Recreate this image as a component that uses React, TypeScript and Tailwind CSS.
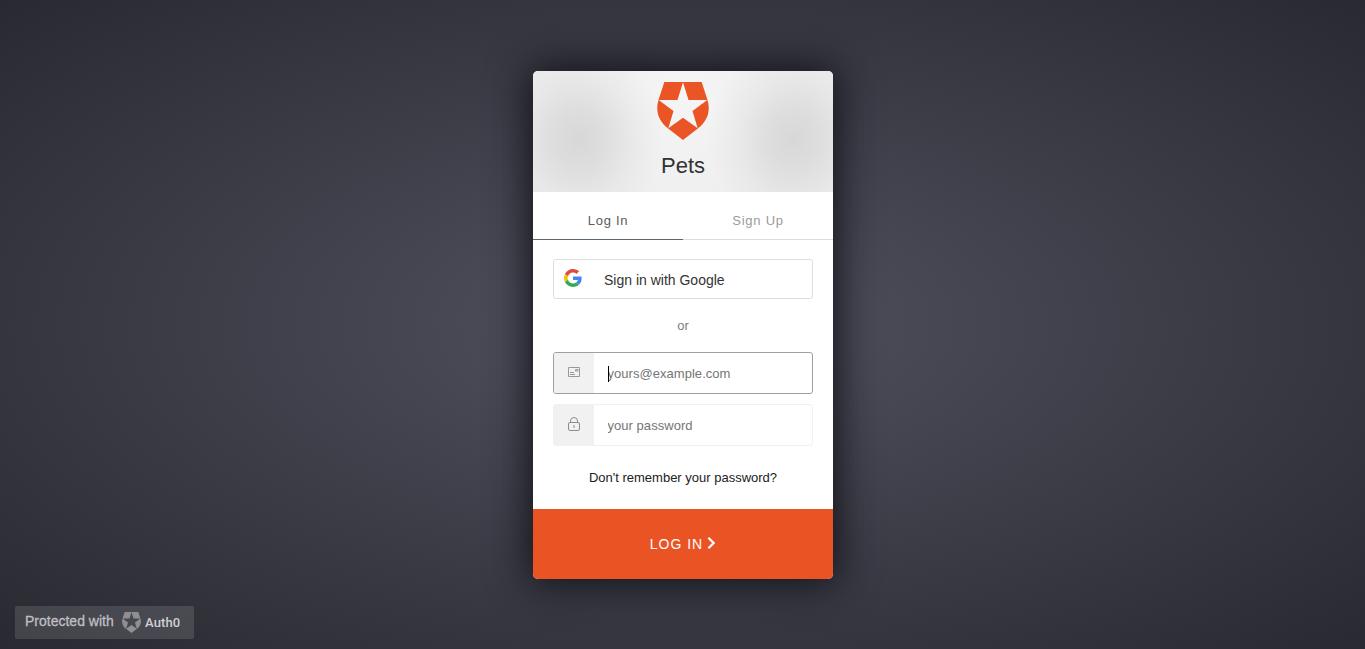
function Shield({ className }: { className: string }) {
  return (
    <svg viewBox="0 0 156 174" preserveAspectRatio="none" className={className} fill="currentColor" fillRule="evenodd" aria-hidden="true">
      <path d="M22 0H134L151.500 54C162 88 150 119 122.500 139.500L78 174L33.500 139.500C6 119 -6 88 4.500 54ZM78 1L61.500 54H5L49.500 87L34 139L78 107L122 139L106.500 87L151 54H94.500Z" />
    </svg>
  );
}

function GoogleIcon() {
  return (
    <svg viewBox="0 0 48 48" className="h-[18px] w-[18px]" aria-hidden="true">
      <path fill="#DE4B3D" d="M24 9.5c3.54 0 6.71 1.22 9.21 3.6l6.85-6.85C35.9 2.38 30.47 0 24 0 14.62 0 6.51 5.38 2.56 13.22l7.98 6.19C12.43 13.72 17.74 9.5 24 9.5z" />
      <path fill="#4285F4" d="M46.98 24.55c0-1.57-.15-3.09-.38-4.55H24v9.02h12.94c-.58 2.96-2.26 5.48-4.78 7.18l7.73 6c4.51-4.18 7.09-10.36 7.09-17.65z" />
      <path fill="#FBBC05" d="M10.53 28.59c-.48-1.45-.76-2.99-.76-4.59s.27-3.14.76-4.59l-7.98-6.19C.92 16.46 0 20.12 0 24c0 3.88.92 7.54 2.56 10.78l7.97-6.19z" />
      <path fill="#34A853" d="M24 48c6.48 0 11.93-2.13 15.89-5.81l-7.73-6c-2.15 1.45-4.92 2.3-8.16 2.3-6.26 0-11.57-4.22-13.47-9.91l-7.98 6.19C6.51 42.62 14.62 48 24 48z" />
    </svg>
  );
}

function MailIcon() {
  return (
    <svg width="12" height="10" viewBox="0 0 12 10" fill="none" stroke="#999" aria-hidden="true">
      <path d="M.5.5h11v9H.5z" />
      <path d="M7.500 2.500h2.500v1.500H7.500z" />
      <path d="M2 5.500h4M2 7.500h5" />
    </svg>
  );
}

function LockIcon() {
  return (
    <svg width="12" height="14" viewBox="0 0 12 14" fill="none" stroke="#8c8c8c" aria-hidden="true">
      <rect x=".5" y="5.5" width="11" height="8" rx="1.5" />
      <path d="M2.500 5.500V4a3.500 3.500 0 0 1 7 0v1.500M6 8v3" />
    </svg>
  );
}

export default function App() {
  return (
    <div className="flex h-[649px] flex-col overflow-hidden bg-[radial-gradient(#525260,#292931)] font-['Liberation_Sans',Arial,sans-serif]">
      <main className="mx-auto mt-[71px] h-[508px] w-[300px] shrink-0 rounded-[5px] bg-white shadow-[0_0_40px_4px_#111118]">
        <header className="flex h-[121px] flex-col items-center rounded-t-[5px] bg-[#eeeeee] bg-[radial-gradient(ellipse_85px_95px_at_46px_68px,rgba(208,208,208,0.75),rgba(210,210,210,0.6)_30%,rgba(215,215,215,0.28)_65%,transparent),radial-gradient(ellipse_85px_95px_at_260px_68px,rgba(208,208,208,0.75),rgba(210,210,210,0.6)_30%,rgba(215,215,215,0.28)_65%,transparent),radial-gradient(ellipse_120px_130px_at_150px_20px,#f5f5f5,transparent)] pt-[11px]">
          <Shield className="h-[58px] w-[52px] text-[#eb5424]" />
          <h1 className="ml-px mt-[12px] text-[22px] leading-[28px] text-[#333]">Pets</h1>
        </header>
        <nav className="flex h-[48px] pt-[10px] text-center text-[13px] leading-[37px] tracking-[0.75px]">
          <button className="w-[150px] border-b border-[#5c666f] pl-px text-[#5c5c5c]">Log In</button>
          <button className="w-[150px] border-b border-[#dcdcdc] pl-px text-[#9b9b9b]">Sign Up</button>
        </nav>
        <form className="flex h-[269px] flex-col px-[20px] pt-[19px]">
          <button type="button" className="flex h-[40px] shrink-0 items-center rounded-[3px] border border-[#dedede] pl-[10px] text-[#333]">
            <span className="-mt-[2px]"><GoogleIcon /></span>
            <span className="ml-[22.5px] mt-[2px] text-[14px] leading-[20px]">Sign in with Google</span>
          </button>
          <p className="mt-[17px] pl-px text-center text-[13px] leading-[20px] text-[#7c7c7c]">or</p>
          <label className="relative mt-[16px] flex h-[42px] shrink-0 overflow-hidden rounded-[3px] border border-[#a0a0a0]">
            <span className="flex w-[40px] items-center justify-center bg-[#f1f1f1] pb-[2px]"><MailIcon /></span>
            <input type="email" placeholder="yours@example.com" className="w-[218px] pl-[14px] pt-[2px] text-[13px] tracking-[0.04px] outline-none placeholder:text-[#757575]" />
            <span className="absolute left-[54px] top-[13px] h-[16px] w-px bg-black" />
          </label>
          <label className="mt-[10px] flex h-[42px] shrink-0 overflow-hidden rounded-[3px] border border-[#f1f1f1]">
            <span className="flex w-[40px] items-center justify-center bg-[#f1f1f1] pb-[2px]"><LockIcon /></span>
            <input type="password" placeholder="your password" className="w-[218px] pl-[14px] pt-[2px] text-[13px] tracking-[0.04px] outline-none placeholder:text-[#757575]" />
          </label>
          <a className="mt-[22px] pl-px text-center text-[13px] leading-[20px] text-[#222]">Don't remember your password?</a>
        </form>
        <button className="flex h-[70px] w-[300px] items-center justify-center rounded-b-[5px] bg-[#ea5323] text-[14px] tracking-[1px] text-white">
          LOG IN
          <svg width="8" height="12" viewBox="0 0 8 12" fill="none" stroke="currentColor" strokeWidth="2.2" className="-mt-[2px] ml-[4px]" aria-hidden="true">
            <path d="M1.400 .8l5.200 5.200-5.200 5.200" />
          </svg>
        </button>
      </main>
      <footer className="ml-[15px] mt-[27px] flex h-[33px] w-[179px] shrink-0 items-center rounded-[2px] bg-white/12 pl-[10px] text-[#d0d0d3]">
        <span className="-mt-[2px] w-[97px] whitespace-nowrap text-[14px] text-[#bfbfc3] [-webkit-text-stroke:0.3px]">Protected with</span>
        <Shield className="h-[21px] w-[19px] text-[#8f8f93]" />
        <span className="ml-[4px] mt-[1px] font-[Roboto,sans-serif] text-[13px] font-medium tracking-[0.1px]">Auth0</span>
      </footer>
    </div>
  );
}
